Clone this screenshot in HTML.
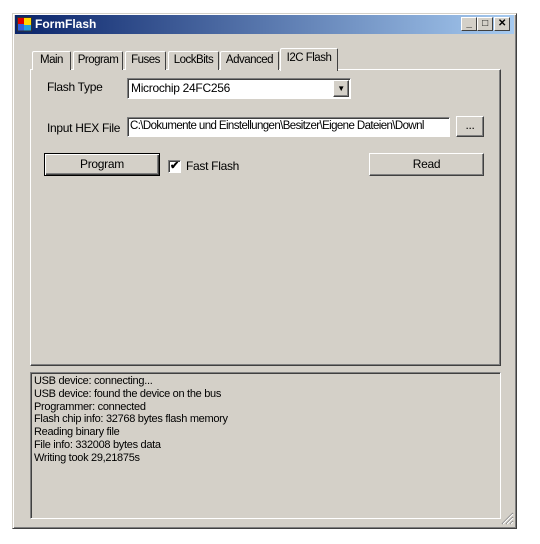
<!DOCTYPE html>
<html><head><meta charset="utf-8"><style>
*{box-sizing:border-box;margin:0;padding:0}
body{width:540px;height:544px;background:#fff;position:relative;font-family:"Liberation Sans",sans-serif;font-size:11.5px;color:#000;overflow:hidden;letter-spacing:-0.3px}
.abs{position:absolute}
.win{left:12px;top:13px;width:505px;height:516px;background:#d4d0c8;border:1px solid;border-color:#d4d0c8 #404040 #404040 #d4d0c8;box-shadow:inset 1px 1px #fff,inset -1px -1px #808080}
.title{left:15px;top:15px;width:499px;height:19px;background:linear-gradient(to right,#0a246a,#a6caf0);color:#fff;font-weight:bold;font-size:12px;line-height:19px;padding-left:20px;letter-spacing:0}
.tb{top:17px;width:16px;height:14px;background:#d4d0c8;border:1px solid;border-color:#fff #404040 #404040 #fff;font-size:10px;line-height:12px;text-align:center;font-weight:bold}
.raised{border:1px solid;border-color:#fff #404040 #404040 #fff;box-shadow:inset -1px -1px #808080}
.sunk{border:1px solid;border-color:#808080 #fff #fff #808080;box-shadow:inset 1px 1px #404040}
.tab{top:51px;height:19px;border:1px solid;border-bottom:none;border-color:#fff #404040 #404040 #fff;background:#d4d0c8;text-align:center;line-height:17px;font-size:11.5px;border-radius:2px 2px 0 0;letter-spacing:-0.5px}
.btn{background:#d4d0c8;text-align:center;font-size:12px}
.log div{height:12.8px;line-height:12.8px;font-size:11px}
</style></head><body>
<div class="abs win"></div>
<div class="abs title">FormFlash</div>
<svg class="abs" style="left:17px;top:17px" width="16" height="15"><rect x="0" y="0" width="7" height="7" fill="#d00"/><rect x="7" y="0" width="8" height="8" fill="#ffd800"/><rect x="0" y="7" width="7" height="7" fill="#3060e0"/><rect x="7" y="8" width="8" height="6" fill="#20a0e0"/><rect x="0.5" y="0.5" width="14" height="13.5" fill="none" stroke="#333" stroke-width="1"/></svg>
<div class="abs tb" style="left:461px">_</div>
<div class="abs tb" style="left:477px">□</div>
<div class="abs tb" style="left:494px">✕</div>
<div class="abs raised" style="left:30px;top:69px;width:471px;height:297px;border-left-color:#fff;border-top-color:#fff"></div>
<div class="abs tab" style="left:32px;width:39px">Main</div>
<div class="abs tab" style="left:73px;width:50px">Program</div>
<div class="abs tab" style="left:125px;width:41px">Fuses</div>
<div class="abs tab" style="left:168px;width:51px">LockBits</div>
<div class="abs tab" style="left:220px;width:59px">Advanced</div>
<div class="abs tab" style="left:280px;top:48px;width:58px;height:23px;z-index:2;line-height:19px">I2C Flash</div>
<div class="abs" style="left:47px;top:80px;font-size:12px">Flash Type</div>
<div class="abs sunk" style="left:127px;top:78px;width:224px;height:21px;background:#fff;padding:2px 3px;font-size:12px">Microchip 24FC256</div>
<div class="abs raised btn" style="left:333px;top:80px;width:16px;height:17px;font-size:8px;line-height:15px">▼</div>
<div class="abs" style="left:47px;top:121px;font-size:12px">Input HEX File</div>
<div class="abs sunk" style="left:127px;top:117px;width:323px;height:20px;background:#fff;padding:2px 2px;font-size:11.5px;white-space:nowrap;overflow:hidden;letter-spacing:-0.6px">C:\Dokumente und Einstellungen\Besitzer\Eigene Dateien\Downl</div>
<div class="abs raised btn" style="left:456px;top:116px;width:28px;height:21px;line-height:17px">...</div>
<div class="abs btn" style="left:44px;top:153px;width:116px;height:23px;border:1px solid #000;box-shadow:inset 1px 1px #fff,inset -1px -1px #404040,inset -2px -2px #808080;line-height:20px">Program</div>
<div class="abs sunk" style="left:168px;top:160px;width:13px;height:13px;background:#fff;font-size:11px;line-height:10px;text-align:center;font-weight:bold">✔</div>
<div class="abs" style="left:186px;top:159px;font-size:12px">Fast Flash</div>
<div class="abs raised btn" style="left:369px;top:153px;width:115px;height:23px;line-height:20px">Read</div>
<div class="abs sunk log" style="left:30px;top:372px;width:471px;height:147px;padding:2px 3px">
<div>USB device: connecting...</div>
<div>USB device: found the device on the bus</div>
<div>Programmer: connected</div>
<div>Flash chip info: 32768 bytes flash memory</div>
<div>Reading binary file</div>
<div>File info: 332008 bytes data</div>
<div>Writing took 29,21875s</div>
</div>
<svg class="abs" style="left:501px;top:512px" width="13" height="13"><path d="M12 1L1 12M12 5L5 12M12 9L9 12" stroke="#808080" stroke-width="1.2"/><path d="M12 2L2 12M12 6L6 12M12 10L10 12" stroke="#fff" stroke-width="1"/></svg>
</body></html>
